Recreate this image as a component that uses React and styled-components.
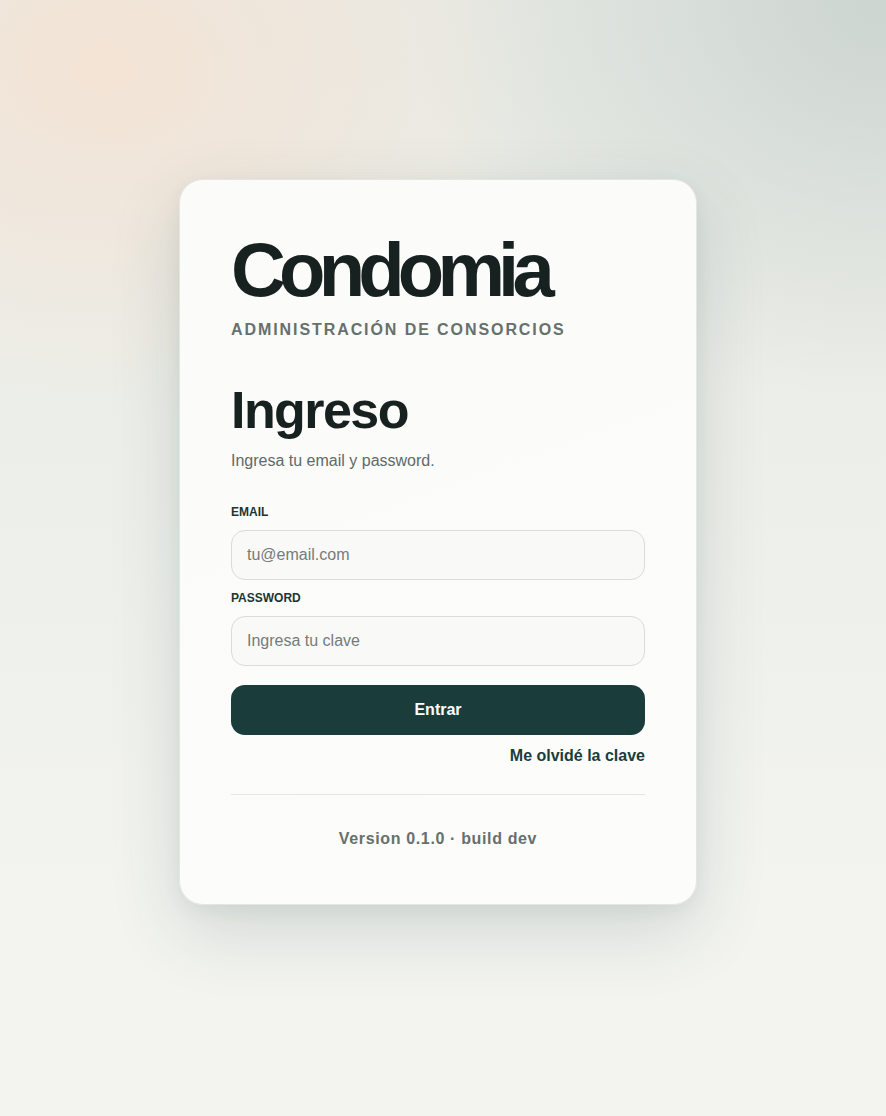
import styled, { createGlobalStyle } from 'styled-components'

const GlobalStyle = createGlobalStyle`
    * {
        box-sizing: border-box;
    }

    body {
        margin: 0;
        font-family: 'Liberation Sans', Arial, sans-serif;
        background: #f2f3ef;
    }
`

export default function App() {
    return (
        <>
            <GlobalStyle />
            <Page>
                <Card>
                    <Brand>Condomia</Brand>
                    <Tagline>Administración de consorcios</Tagline>

                    <Title>Ingreso</Title>
                    <Lead>Ingresa tu email y password.</Lead>

                    <Form onSubmit={e => e.preventDefault()}>
                        <Field>
                            <Label htmlFor="email">Email</Label>
                            <Input id="email" type="email" placeholder="tu@email.com" />
                        </Field>
                        <Field>
                            <Label htmlFor="password">Password</Label>
                            <Input id="password" type="password" placeholder="Ingresa tu clave" />
                        </Field>
                        <Submit type="submit">Entrar</Submit>
                    </Form>

                    <Forgot href="#">Me olvidé la clave</Forgot>
                    <Divider />
                    <Version>Version 0.1.0 · build dev</Version>
                </Card>
            </Page>
        </>
    )
}

const Page = styled.div`
    min-height: 100vh;
    display: flex;
    justify-content: center;
    align-items: flex-start;
    padding: 179px 10px 0 0;
    background:
        radial-gradient(ellipse 620px 480px at 12% 6%, rgba(244, 227, 212, 0.95), rgba(244, 227, 212, 0) 72%),
        radial-gradient(ellipse 620px 520px at 100% 0%, rgba(205, 213, 208, 1), rgba(205, 213, 208, 0) 78%),
        linear-gradient(180deg, #e8ebe6 0%, #edefea 45%, #f3f4f0 80%, #f3f4f0 100%);
`

const Card = styled.div`
    width: 518px;
    padding: 52px 51px 55px;
    background: linear-gradient(160deg, #fbfbfa 0%, #fcfcfb 100%);
    border: 1px solid #e3e6e3;
    border-radius: 24px;
    box-shadow: 0 26px 70px rgba(40, 70, 60, 0.16), 0 6px 18px rgba(40, 70, 60, 0.06);
    display: flex;
    flex-direction: column;
`

const Brand = styled.h1`
    margin: 0;
    font-size: 76px;
    line-height: 1;
    font-weight: 700;
    letter-spacing: -0.09em;
    color: #17211f;
`

const Tagline = styled.p`
    margin: 12px 0 0;
    font-size: 16px;
    line-height: 20px;
    font-weight: 700;
    letter-spacing: 0.12em;
    text-transform: uppercase;
    color: #66706c;
`

const Title = styled.h2`
    margin: 44px 0 0;
    font-size: 52px;
    line-height: 1;
    font-weight: 700;
    letter-spacing: -0.03em;
    color: #17211f;
`

const Lead = styled.p`
    margin: 13px 0 0;
    font-size: 16px;
    line-height: 24px;
    color: #5f6a66;
`

const Form = styled.form`
    margin-top: 31px;
    display: flex;
    flex-direction: column;
`

const Field = styled.div`
    display: flex;
    flex-direction: column;
    gap: 10px;
    margin-bottom: 10px;
`

const Label = styled.label`
    font-size: 12px;
    line-height: 16px;
    font-weight: 700;
    text-transform: uppercase;
    color: #1d3532;
`

const Input = styled.input`
    height: 50px;
    padding: 0 15px;
    border: 1px solid #d9dcd9;
    border-radius: 14px;
    background: #f9f9f8;
    font-family: inherit;
    font-size: 16px;
    color: #17211f;
    outline: none;

    &::placeholder {
        color: #747c79;
    }
`

const Submit = styled.button`
    margin-top: 9px;
    height: 50px;
    border: none;
    border-radius: 14px;
    background: #1a3d3c;
    color: #ffffff;
    font-family: inherit;
    font-size: 16px;
    font-weight: 700;
    cursor: pointer;
`

const Forgot = styled.a`
    margin-top: 11px;
    align-self: flex-end;
    font-size: 16px;
    line-height: 20px;
    font-weight: 700;
    color: #1a3d3c;
    text-decoration: none;
`

const Divider = styled.hr`
    margin: 28px 0 0;
    border: none;
    border-top: 1px solid #e4e6e3;
`

const Version = styled.p`
    margin: 34px 0 0;
    text-align: center;
    font-size: 16px;
    line-height: 20px;
    font-weight: 700;
    letter-spacing: 0.04em;
    color: #66706c;
`
